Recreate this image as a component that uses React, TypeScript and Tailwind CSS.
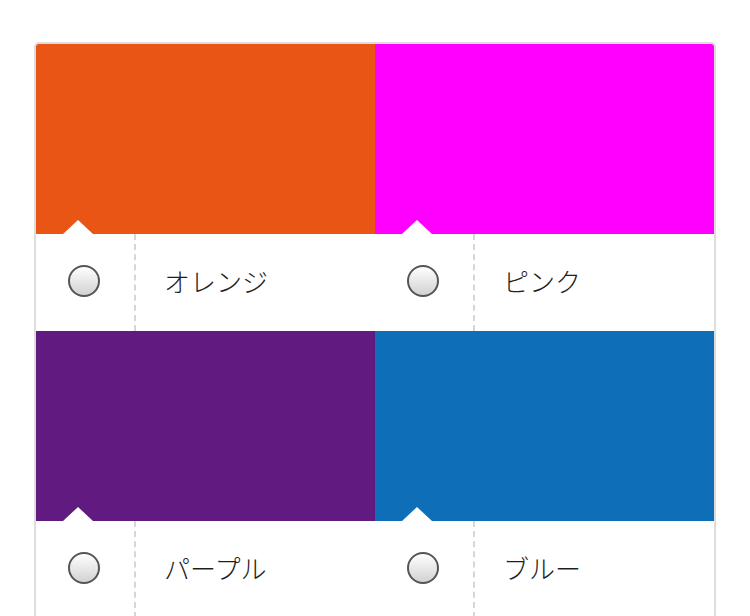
const colors = [
  { name: "オレンジ", bg: "bg-[#e95514]" },
  { name: "ピンク", bg: "bg-[#ff00ff]" },
  { name: "パープル", bg: "bg-[#611a80]" },
  { name: "ブルー", bg: "bg-[#0e6eb8]" },
];

function ColorOption({ name, bg }: { name: string; bg: string }) {
  return (
    <label className="flex flex-col cursor-pointer">
      <div className={`relative h-[190px] ${bg}`}>
        {/* notch */}
        <div className="absolute bottom-0 left-[27px] w-0 h-0 border-l-[15px] border-r-[15px] border-b-[14px] border-l-transparent border-r-transparent border-b-white" />
      </div>
      <div className="flex h-[97px] bg-white">
        <div className="w-[100px] flex items-center justify-center pb-[3px] pr-[3px] border-r-2 border-dashed border-[#d6d6d6]">
          <span className="w-[32px] h-[32px] rounded-full border-2 border-[#555] bg-gradient-to-b from-white to-[#d2d2d2]" />
        </div>
        <div className="flex-1 flex items-center pb-[5px] pl-[28px] text-[26px] font-light text-[#1f1f1f]">
          {name}
        </div>
      </div>
    </label>
  );
}

export default function App() {
  return (
    <div
      className="min-h-screen bg-white pt-[42px] px-[34px]"
      style={{ fontFamily: '"Noto Sans CJK JP", "Noto Sans", sans-serif' }}
    >
      <div className="border-2 border-[#dddddd] rounded-[5px] overflow-hidden grid grid-cols-2">
        {colors.map((c) => (
          <ColorOption key={c.name} name={c.name} bg={c.bg} />
        ))}
      </div>
    </div>
  );
}
